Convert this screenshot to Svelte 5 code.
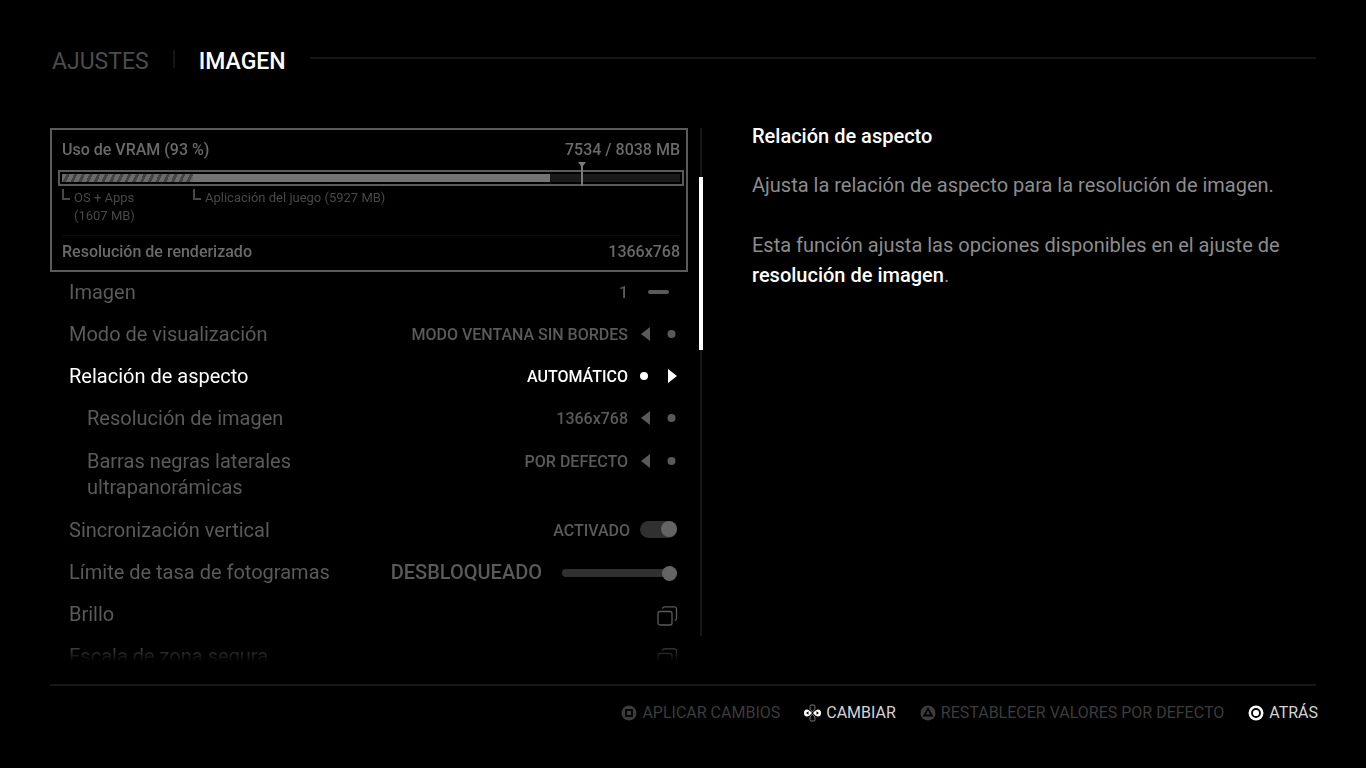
<script lang="ts">
  type Kind = "single" | "step" | "toggle" | "slider" | "link";
  interface Setting {
    id: string;
    label: string;
    kind: Kind;
    value?: string;
    nested?: boolean;
    atStart?: boolean;
  }

  const settings: Setting[] = [
    { id: "monitor", label: "Imagen", kind: "single", value: "1" },
    { id: "mode", label: "Modo de visualización", kind: "step", value: "MODO VENTANA SIN BORDES" },
    { id: "aspect", label: "Relación de aspecto", kind: "step", value: "AUTOMÁTICO", atStart: true },
    { id: "resolution", label: "Resolución de imagen", kind: "step", value: "1366x768", nested: true },
    { id: "bars", label: "Barras negras laterales ultrapanorámicas", kind: "step", value: "POR DEFECTO", nested: true },
    { id: "vsync", label: "Sincronización vertical", kind: "toggle" },
    { id: "fps", label: "Límite de tasa de fotogramas", kind: "slider", value: "DESBLOQUEADO" },
    { id: "brightness", label: "Brillo", kind: "link" },
    { id: "safezone", label: "Escala de zona segura", kind: "link" },
  ];

  // MB
  const system = { name: "OS + Apps", size: 1607, share: 21.2 };
  const game = { name: "Aplicación del juego", size: 5927, share: 57.8 };
  const limit = 84.2;

  let selected = $state("aspect");
  let vsync = $state(true);
  let fps = $state(100);
</script>

<div class="page">
  <header>
    <a href="#ajustes">AJUSTES</a>
    <span class="separator"></span>
    <h1>IMAGEN</h1>
    <span class="rule"></span>
  </header>

  <main>
    <div class="list">
      <section class="vram">
        <div class="pair">
          <span>Uso de VRAM (93 %)</span>
          <span>7534 / 8038 MB</span>
        </div>
        <div class="meter">
          <div class="track">
            <div class="system" style="width: {system.share}%"></div>
            <div class="game" style="width: {game.share}%"></div>
            <svg class="marker" style="left: {limit}%" width="10" height="24" viewBox="0 0 10 24" aria-hidden="true">
              <path d="M1 0h8L6 4v20H4V4z" />
            </svg>
          </div>
        </div>
        <div class="legend">
          <div class="entry" style="width: {system.share}%">
            <i></i><span>{system.name}<br />({system.size} MB)</span>
          </div>
          <div class="entry"><i></i><span>{game.name} ({game.size} MB)</span></div>
        </div>
        <div class="pair render">
          <span>Resolución de renderizado</span>
          <span>1366x768</span>
        </div>
      </section>

      {#each settings as item (item.id)}
        <div
          class="row {item.kind}"
          class:nested={item.nested}
          class:selected={selected === item.id}
          role="group"
          aria-labelledby="{item.id}-label"
          onfocusin={() => (selected = item.id)}
        >
          <label class="label" id="{item.id}-label" for={item.id}>{item.label}</label>
          {#if item.kind === "toggle"}
            <span class="value">{vsync ? "ACTIVADO" : "DESACTIVADO"}</span>
          {:else if item.value}
            <span class="value">{item.value}</span>
          {/if}

          {#if item.kind === "single"}
            <output class="control" id={item.id}><span class="dash"></span></output>
          {:else if item.kind === "step"}
            <div class="control">
              <button id={item.id} aria-label="Anterior">
                <svg width="14" height="16" viewBox="0 0 14 16">
                  {#if item.atStart}
                    <circle cx="6" cy="8" r="4" />
                  {:else}
                    <path d="M12 1v14L3 8z" />
                  {/if}
                </svg>
              </button>
              <button aria-label="Siguiente">
                <svg width="14" height="16" viewBox="0 0 14 16">
                  {#if item.atStart}
                    <path d="M4 1v14l9-7z" />
                  {:else}
                    <circle cx="7.5" cy="8" r="4" />
                  {/if}
                </svg>
              </button>
            </div>
          {:else if item.kind === "toggle"}
            <input type="checkbox" id={item.id} bind:checked={vsync} />
          {:else if item.kind === "slider"}
            <input type="range" id={item.id} min="0" max="100" bind:value={fps} />
          {:else}
            <button class="open" id={item.id} aria-label={item.label}>
              <svg width="21" height="20" viewBox="0 0 21 20">
                <rect x="1" y="5.5" width="14" height="13.5" rx="2" />
                <path d="M5.5 2.8V2.5A2 2 0 0 1 7.5.8H17.5A2 2 0 0 1 19.5 2.8V12.5A2 2 0 0 1 17.8 14.5" />
              </svg>
            </button>
          {/if}
        </div>
      {/each}
    </div>

    <div class="scrollbar"><div class="thumb"></div></div>

    <section class="detail">
      <h2>Relación de aspecto</h2>
      <p>Ajusta la relación de aspecto para la resolución de imagen.</p>
      <p>Esta función ajusta las opciones disponibles en el ajuste de <strong>resolución de imagen</strong>.</p>
    </section>
  </main>

  <footer>
    <button disabled>
      <svg width="16" height="16" viewBox="0 0 16 16">
        <circle cx="8" cy="8" r="7.5" />
        <rect class="cut" x="5" y="5" width="6" height="6" />
      </svg>
      APLICAR CAMBIOS
    </button>
    <button>
      <svg width="17" height="16" viewBox="0 0 17 16">
        <path class="thin" d="M6 1.500Q6 0 7 0h3q1 0 1 1.500V4L8.500 7 6 4zM6 14.500Q6 16 7 16h3q1 0 1-1.500V12L8.500 9 6 12z" />
        <path d="M3 4.500Q5 4.500 8 8 5 11.500 3 11.500 0 11.500 0 8T3 4.500zM14 4.500Q12 4.500 9 8q3 3.500 5 3.500 3 0 3-3.500t-3-3.500z" />
        <path class="hole" d="M2 8l2.500-1.800v3.600zM15 8l-2.500-1.800v3.600z" />
      </svg>
      CAMBIAR
    </button>
    <button disabled>
      <svg width="16" height="16" viewBox="0 0 16 16">
        <circle cx="8" cy="8" r="7.5" />
        <path class="cut" d="M8 3.8l3.8 6.7H4.2z" />
      </svg>
      RESTABLECER VALORES POR DEFECTO
    </button>
    <button>
      <svg width="16" height="16" viewBox="0 0 16 16">
        <circle cx="8" cy="8" r="7.5" />
        <circle class="cut" cx="8" cy="8" r="4" />
      </svg>
      ATRÁS
    </button>
  </footer>
</div>

<style>
  :global(body) {
    background: #000;
  }
  .page {
    --dim: #5a5a5a;
    --line: #161616;
    box-sizing: border-box;
    display: flex;
    flex-direction: column;
    height: 100vh;
    padding: 0 50px;
    color: var(--dim);
    font-family: Roboto, "Liberation Sans", sans-serif;
    font-size: 20px;
    line-height: 26px;
  }
  button {
    display: flex;
    align-items: center;
    padding: 0;
    border: 0;
    background: none;
    color: inherit;
    font: inherit;
    cursor: pointer;
  }
  svg {
    display: block;
    flex: none;
    fill: currentColor;
  }

  header {
    display: flex;
    align-items: center;
    height: 32px;
    padding: 46px 0 50px 2px;
    font-size: 23px;
  }
  header a {
    color: #4c4c4c;
    text-decoration: none;
  }
  h1 {
    margin: 0;
    color: #fff;
    font-size: 23px;
    font-weight: 500;
  }
  .separator {
    width: 2px;
    height: 18px;
    margin: 0 24px 6px;
    background: var(--line);
  }
  .rule {
    flex: 1;
    height: 2px;
    margin: 0 0 8px 24px;
    background: var(--line);
  }

  main {
    display: grid;
    flex: 1;
    grid-template-columns: minmax(0, 638fr) 4px minmax(0, 602fr);
    column-gap: 11px;
    min-height: 0;
  }
  .list {
    margin-bottom: 22px;
    overflow: hidden;
    mask-image: linear-gradient(#000 calc(100% - 20px), transparent);
  }

  .vram {
    margin-bottom: -1px;
    padding: 10px 2px 8px 6px;
    border: 2px solid #5a5a5a;
    color: #6a6a6a;
    font-size: 16px;
    font-weight: 500;
    line-height: 20px;
  }
  .pair {
    display: flex;
    justify-content: space-between;
    margin: 0 4px;
  }
  .meter {
    margin-top: 10px;
    padding: 2px;
    border: 2px solid #5a5a5a;
  }
  .track {
    position: relative;
    display: flex;
    height: 8px;
    background: #1a1a1a;
  }
  .system {
    background: repeating-linear-gradient(115deg, #6a6a6a 0 4px, #444 4px 7px);
  }
  .game {
    background: #737373;
  }
  .marker {
    position: absolute;
    bottom: -4px;
    margin-left: -5px;
    color: #7a7a7a;
  }
  .legend {
    display: flex;
    margin: 3px 4px 10px;
    color: #484848;
    font-size: 13px;
    font-weight: 400;
    line-height: 18px;
  }
  .entry {
    display: flex;
    flex: none;
    gap: 4px;
  }
  .entry i {
    width: 6px;
    height: 9px;
    border: solid #484848;
    border-width: 0 0 2px 2px;
  }
  .render {
    padding-top: 6px;
    border-top: 1px solid #0c0c0c;
  }

  .row {
    display: flex;
    align-items: flex-start;
    gap: 10px;
    padding: 8px 10px 8px 19px;
  }
  .row.nested {
    padding-bottom: 9px;
    padding-left: 37px;
  }
  .row.selected {
    color: #fff;
  }
  .label {
    max-width: 270px;
    margin-right: auto;
  }
  .value {
    margin-bottom: -2px;
    font-size: 16px;
    font-weight: 500;
    line-height: 28px;
  }
  .slider .value {
    margin-right: 10px;
    font-size: 20px;
    line-height: 26px;
  }
  .control {
    display: flex;
    align-items: center;
    justify-content: space-between;
    width: 40px;
    height: 26px;
  }
  .dash {
    width: 21px;
    height: 4px;
    margin: 0 auto;
    border-radius: 2px;
    background: currentColor;
  }
  input {
    appearance: none;
    margin: 0;
    background: #303030;
    cursor: pointer;
  }
  input[type="checkbox"] {
    width: 37px;
    height: 17px;
    margin: 4px 1px 0 0;
    border-radius: 9px;
  }
  input[type="checkbox"]::before {
    content: "";
    display: block;
    width: 16px;
    height: 16px;
    border-radius: 8px;
    background: #646464;
  }
  input[type="checkbox"]:checked::before {
    margin-left: auto;
  }
  input[type="range"] {
    width: 115px;
    height: 8px;
    margin: 10px 1px 0 0;
    border-radius: 4px;
  }
  input[type="range"]::-webkit-slider-thumb {
    appearance: none;
    width: 15px;
    height: 15px;
    border-radius: 8px;
    background: #646464;
  }
  .open {
    margin: 5px 0 0;
  }
  .open svg {
    fill: none;
    stroke: currentColor;
    stroke-width: 1.3;
  }

  .scrollbar {
    display: flex;
    flex-direction: column;
    margin-bottom: 48px;
    background: linear-gradient(var(--line), var(--line)) center / 2px 100% no-repeat;
  }
  .thumb {
    height: 34%;
    margin-top: 49px;
    background: #fff;
  }

  .detail {
    margin-left: 38px;
    color: #8c8c8c;
    line-height: 30px;
  }
  h2 {
    margin: 0 0 26px;
    color: #fff;
    font-size: 20px;
    font-weight: 500;
    line-height: 16px;
  }
  p {
    margin: 0 0 30px;
  }
  strong {
    color: #fff;
    font-weight: 500;
  }

  footer {
    display: flex;
    justify-content: flex-end;
    gap: 24px;
    height: 82px;
    margin-right: -2px;
    padding-top: 2px;
    background: linear-gradient(var(--line), var(--line)) 0 0 / calc(100% - 2px) 2px no-repeat;
    font-size: 16px;
  }
  footer button {
    gap: 5px;
    height: 54px;
    color: #d4d4d4;
  }
  footer button:disabled {
    color: #3c3c3c;
    cursor: default;
  }
  footer svg {
    overflow: visible;
  }
  footer button:enabled svg {
    color: #fff;
  }
  .cut {
    fill: none;
    stroke: #000;
    stroke-width: 1.8;
  }
  .thin {
    fill: none;
    stroke: #777;
    stroke-width: 1;
  }
  .hole {
    fill: #000;
  }
</style>
